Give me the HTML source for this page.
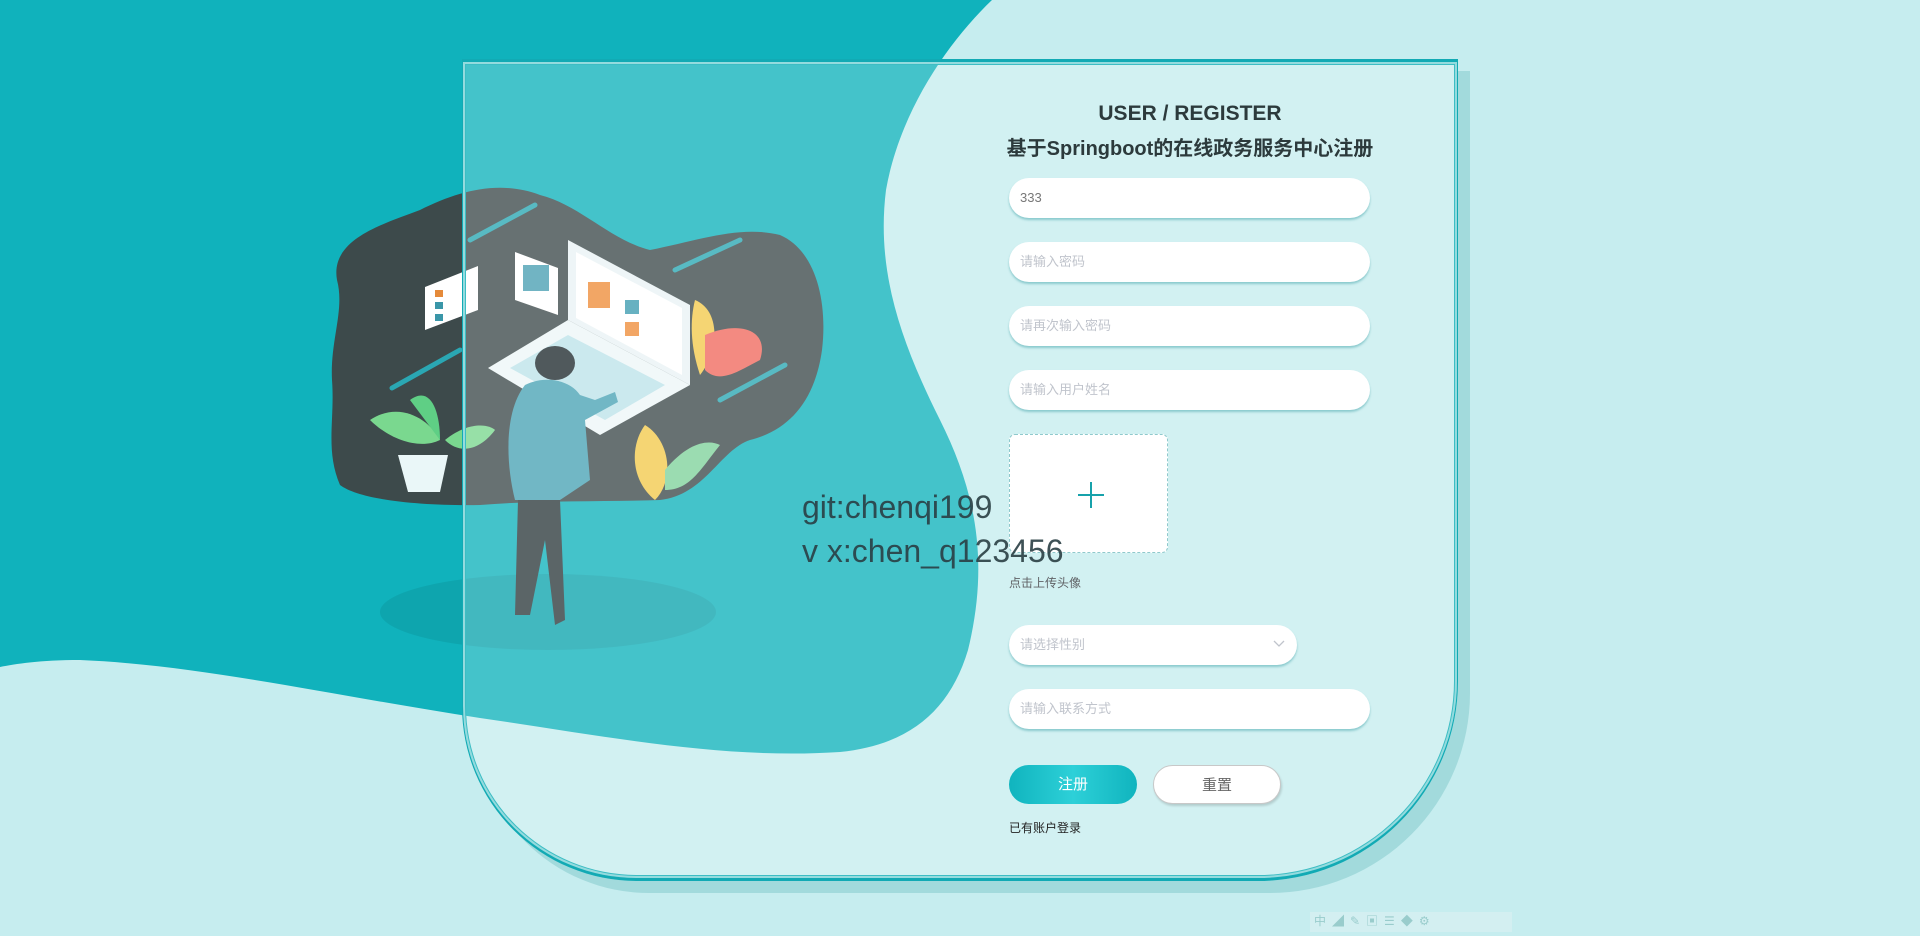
<!DOCTYPE html>
<html><head><meta charset="utf-8"><style>
*{margin:0;padding:0;box-sizing:border-box}
body{width:1920px;height:936px;overflow:hidden;background:#c6edef;font-family:"Liberation Sans","Noto Sans CJK SC",sans-serif;position:relative}
.bg{position:absolute;left:0;top:0}
.card{position:absolute;left:462px;top:59px;width:996px;height:822px;background:rgba(255,255,255,0.22);border:1px solid #12aab4;border-top:3px solid #12aab4;border-bottom:3px solid #12aab4;border-radius:0 0 200px 175px;box-shadow:12px 12px 0 #a2dadc, inset 0 0 0 2px rgba(255,255,255,.45), inset 0 0 0 3px #3dbdc4}
.t1{position:absolute;left:1000px;width:380px;text-align:center;top:102px;font-size:21px;font-weight:bold;color:#2c3a3c}
.t2{position:absolute;left:960px;width:460px;text-align:center;top:132px;font-size:20px;font-weight:bold;color:#2c3a3c}
.in{position:absolute;left:1009px;width:361px;height:40px;background:#fff;border-radius:20px;box-shadow:0 2px 2px rgba(80,170,175,.55);font-size:13px;color:#c0c4cc;line-height:40px;padding-left:11px}
.up{position:absolute;left:1009px;top:434px;width:159px;height:119px;background:#fff;border:1px dashed #8fc9cc;border-radius:6px}
.up:before{content:"";position:absolute;left:68px;top:59px;width:26px;height:2px;background:#17a2ab}
.up:after{content:"";position:absolute;left:80px;top:47px;width:2px;height:26px;background:#17a2ab}
.wm{position:absolute;left:802px;font-size:32px;color:#2a3f44;opacity:.9}
.btn{position:absolute;top:765px;height:39px;width:128px;border-radius:20px;text-align:center;line-height:39px;font-size:15px}
</style></head><body>
<svg class="bg" width="1920" height="936" viewBox="0 0 1920 936">
<path d="M0 0 H992 C950 40 900 110 886 190 C876 270 900 340 940 420 C975 490 990 560 968 650 C950 710 910 745 840 752 C720 760 600 735 480 718 C330 695 200 665 80 660 C40 660 15 664 0 667 Z" fill="#10b2bc"/>
<ellipse cx="548" cy="612" rx="168" ry="38" fill="#0c9aa3" opacity=".55"/>
<path d="M337 280 C330 240 380 225 420 210 C460 190 500 180 540 195 C580 205 610 240 650 250 C700 240 740 225 780 235 C815 250 828 300 822 350 C815 400 790 430 750 440 C720 450 705 495 660 500 C600 502 540 500 480 505 C420 506 360 500 340 485 C325 450 335 420 332 380 C330 340 345 310 337 280 Z" fill="#3d4a4b"/>
<g stroke="#2aa7b3" stroke-width="5" stroke-linecap="round"><line x1="470" y1="240" x2="535" y2="205"/><line x1="675" y1="270" x2="740" y2="240"/><line x1="392" y1="388" x2="460" y2="350"/><line x1="720" y1="400" x2="785" y2="365"/></g>
<path d="M425 287 L478 266 L478 310 L425 330 Z" fill="#fff"/>
<rect x="435" y="290" width="8" height="7" fill="#e58a3a"/><rect x="435" y="302" width="8" height="7" fill="#3a96a8"/><rect x="435" y="314" width="8" height="7" fill="#3a96a8"/>
<path d="M515 252 L558 268 L558 315 L515 300 Z" fill="#fff"/><rect x="523" y="265" width="26" height="26" fill="#4a9fb3"/>
<path d="M568 240 L690 305 L690 385 L568 320 Z" fill="#e9f3f5"/><path d="M576 252 L682 308 L682 375 L576 318 Z" fill="#fff"/>
<rect x="588" y="282" width="22" height="26" fill="#ef8d3a"/><rect x="625" y="300" width="14" height="14" fill="#3d9bb0"/><rect x="625" y="322" width="14" height="14" fill="#ef8d3a"/>
<path d="M488 368 L568 320 L690 385 L600 435 Z" fill="#eef7f8"/><path d="M510 368 L568 335 L665 385 L605 420 Z" fill="#bde3ea"/>
<path d="M695 300 C720 310 720 350 700 375 C690 345 690 320 695 300Z" fill="#f2c94c"/>
<path d="M705 335 C740 320 770 330 760 360 C740 370 720 385 705 370Z" fill="#f06a5e"/>
<path d="M645 425 C670 440 675 480 655 500 C630 480 630 445 645 425Z" fill="#f2c94c"/>
<path d="M665 470 C690 440 710 440 720 445 C700 470 690 490 665 490Z" fill="#7fd39b"/>
<path d="M370 420 C400 400 430 420 440 440 C420 450 390 440 370 420Z" fill="#7ad88f"/><path d="M410 400 C430 385 440 410 440 440Z" fill="#5fcf85"/><path d="M445 440 C470 420 490 425 495 430 C480 450 460 455 445 440Z" fill="#7ad88f"/>
<path d="M398 455 L448 455 L440 492 L408 492 Z" fill="#eaf7f8"/>
<ellipse cx="555" cy="363" rx="20" ry="17" fill="#1f2b2f"/>
<path d="M525 385 C545 375 570 380 580 395 L595 400 L615 392 L618 402 L585 420 L590 480 L560 500 L515 500 C505 460 505 410 525 385Z" fill="#4aa3b5"/>
<path d="M518 500 L560 500 L565 620 L555 625 L545 540 L530 615 L515 615 Z" fill="#2d3a3d"/>
</svg>
<div class="card"></div>
<div class="t1">USER / REGISTER</div>
<div class="t2">基于Springboot的在线政务服务中心注册</div>
<div class="in" style="top:178px;color:#777">333</div>
<div class="in" style="top:242px">请输入密码</div>
<div class="in" style="top:306px">请再次输入密码</div>
<div class="in" style="top:370px">请输入用户姓名</div>
<div class="up"></div>
<div style="position:absolute;left:1009px;top:574px;font-size:12px;color:#606266">点击上传头像</div>
<div class="in" style="top:625px;width:288px">请选择性别<svg style="position:absolute;right:12px;top:15px" width="12" height="8" viewBox="0 0 12 8"><path d="M1 1 L6 6 L11 1" stroke="#c0c4cc" fill="none" stroke-width="1.3"/></svg></div>
<div class="in" style="top:689px">请输入联系方式</div>
<div class="btn" style="left:1009px;background:linear-gradient(90deg,#10b4be,#2dd0d8,#10b4be);color:#fff">注册</div>
<div class="btn" style="left:1153px;background:#fff;border:1px solid #c8c8c8;color:#666;box-shadow:1px 2px 2px rgba(0,0,0,.15)">重置</div>
<div style="position:absolute;left:1009px;top:819px;font-size:12px;color:#222">已有账户登录</div>
<div class="wm" style="top:489px">git:chenqi199</div>
<div class="wm" style="top:533px">v x:chen_q123456</div>
<div style="position:absolute;left:1310px;top:912px;width:202px;height:20px;background:rgba(220,240,242,.6);font-size:12px;color:#9cc;letter-spacing:6px;padding-left:4px">中◢✎▣☰◆⚙</div>
</body></html>
